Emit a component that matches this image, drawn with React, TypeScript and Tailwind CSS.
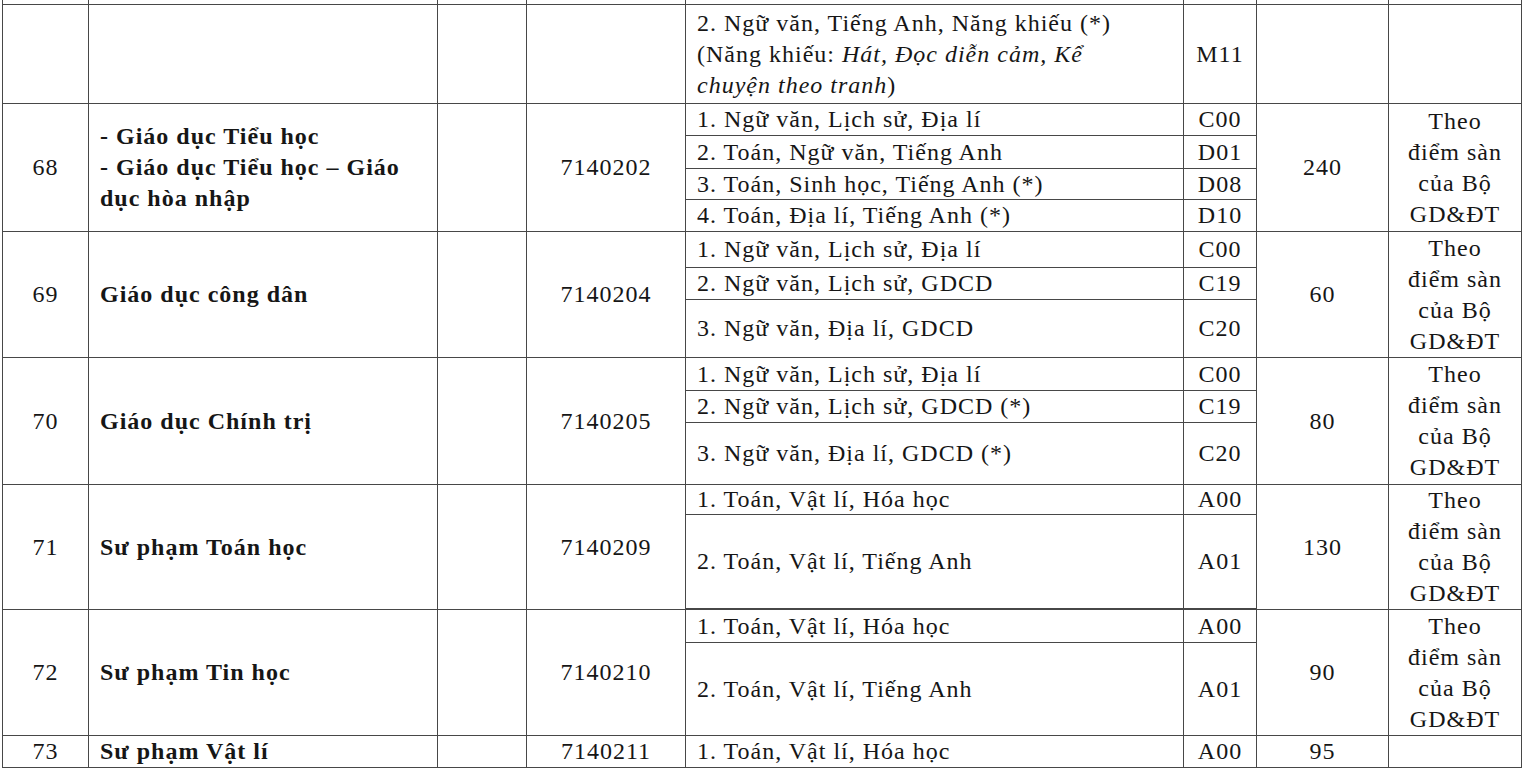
import type { ReactNode } from "react";

type Sub = { text: ReactNode; block: string; h: string };
type Row = {
  stt: string;
  name: ReactNode;
  code: string;
  subs: Sub[];
  quota: string;
  note: boolean;
};

const rows: Row[] = [
  {
    stt: "",
    name: "",
    code: "",
    subs: [
      {
        text: (
          <>
            2. Ngữ văn, Tiếng Anh, Năng khiếu (*)
            <br />
            (Năng khiếu: <i>Hát, Đọc diễn cảm, Kể</i>
            <br />
            <i>chuyện theo tranh</i>)
          </>
        ),
        block: "M11",
        h: "h-[98px]",
      },
    ],
    quota: "",
    note: false,
  },
  {
    stt: "68",
    name: (
      <>
        - Giáo dục Tiểu học
        <br />- Giáo dục Tiểu học – Giáo
        <br />
        dục hòa nhập
      </>
    ),
    code: "7140202",
    subs: [
      { text: "1. Ngữ văn, Lịch sử, Địa lí", block: "C00", h: "h-[31px]" },
      { text: "2. Toán, Ngữ văn, Tiếng Anh", block: "D01", h: "h-[32px]" },
      { text: "3. Toán, Sinh học, Tiếng Anh (*)", block: "D08", h: "h-[30px]" },
      { text: "4. Toán, Địa lí, Tiếng Anh (*)", block: "D10", h: "h-[31px]" },
    ],
    quota: "240",
    note: true,
  },
  {
    stt: "69",
    name: "Giáo dục công dân",
    code: "7140204",
    subs: [
      { text: "1. Ngữ văn, Lịch sử, Địa lí", block: "C00", h: "h-[35px]" },
      { text: "2. Ngữ văn, Lịch sử, GDCD", block: "C19", h: "h-[31px]" },
      { text: "3. Ngữ văn, Địa lí, GDCD", block: "C20", h: "h-[57px]" },
    ],
    quota: "60",
    note: true,
  },
  {
    stt: "70",
    name: "Giáo dục Chính trị",
    code: "7140205",
    subs: [
      { text: "1. Ngữ văn, Lịch sử, Địa lí", block: "C00", h: "h-[32px]" },
      { text: "2. Ngữ văn, Lịch sử, GDCD (*)", block: "C19", h: "h-[31px]" },
      { text: "3. Ngữ văn, Địa lí, GDCD (*)", block: "C20", h: "h-[61px]" },
    ],
    quota: "80",
    note: true,
  },
  {
    stt: "71",
    name: "Sư phạm Toán học",
    code: "7140209",
    subs: [
      { text: "1. Toán, Vật lí, Hóa học", block: "A00", h: "h-[29px]" },
      { text: "2. Toán, Vật lí, Tiếng Anh", block: "A01", h: "h-[93px]" },
    ],
    quota: "130",
    note: true,
  },
  {
    stt: "72",
    name: "Sư phạm Tin học",
    code: "7140210",
    subs: [
      { text: "1. Toán, Vật lí, Hóa học", block: "A00", h: "h-[32px]" },
      { text: "2. Toán, Vật lí, Tiếng Anh", block: "A01", h: "h-[92px]" },
    ],
    quota: "90",
    note: true,
  },
  {
    stt: "73",
    name: "Sư phạm Vật lí",
    code: "7140211",
    subs: [{ text: "1. Toán, Vật lí, Hóa học", block: "A00", h: "h-[31px]" }],
    quota: "95",
    note: false,
  },
];

function Note() {
  return (
    <div>
      Theo
      <br />
      điểm sàn
      <br />
      của Bộ
      <br />
      GD&amp;ĐT
    </div>
  );
}

export default function App() {
  return (
    <div className="min-h-screen bg-white [font-family:'Liberation_Serif','Times_New_Roman',serif] text-[24px] leading-[31px] tracking-[1px] text-[#161616]">
      <div className="ml-[2px] flex w-[1520px] flex-col gap-px bg-[#474747] px-px pb-px">
        {/* tail of the row above */}
        <div className="grid h-[4px] grid-cols-[85px_348px_88px_158px_497px_72px_131px_132px] gap-px">
          {Array.from({ length: 8 }).map((_, i) => (
            <div key={i} className="bg-white" />
          ))}
        </div>

        {rows.map((r, idx) => (
          <div
            key={idx}
            className="grid grid-cols-[85px_348px_88px_158px_497px_72px_131px_132px] gap-px"
          >
            <div className="flex items-center justify-center bg-white">{r.stt}</div>
            <div className="flex items-center whitespace-nowrap bg-white pl-[11px] font-bold">
              <div>{r.name}</div>
            </div>
            <div className="bg-white" />
            <div className="flex items-center justify-center bg-white">{r.code}</div>
            <div className="col-span-2 flex flex-col gap-px">
              {r.subs.map((s, i) => (
                <div
                  key={i}
                  className={`grid shrink-0 grid-cols-[497px_72px] grid-rows-[minmax(0,1fr)] gap-px ${s.h}`}
                >
                  <div className="flex min-h-0 items-center whitespace-nowrap bg-white pl-[11px]">
                    <div>{s.text}</div>
                  </div>
                  <div className="flex min-h-0 items-center justify-center bg-white">{s.block}</div>
                </div>
              ))}
            </div>
            <div className="flex items-center justify-center bg-white">{r.quota}</div>
            <div className="flex items-center justify-center bg-white text-center">
              {r.note && <Note />}
            </div>
          </div>
        ))}
      </div>
    </div>
  );
}
